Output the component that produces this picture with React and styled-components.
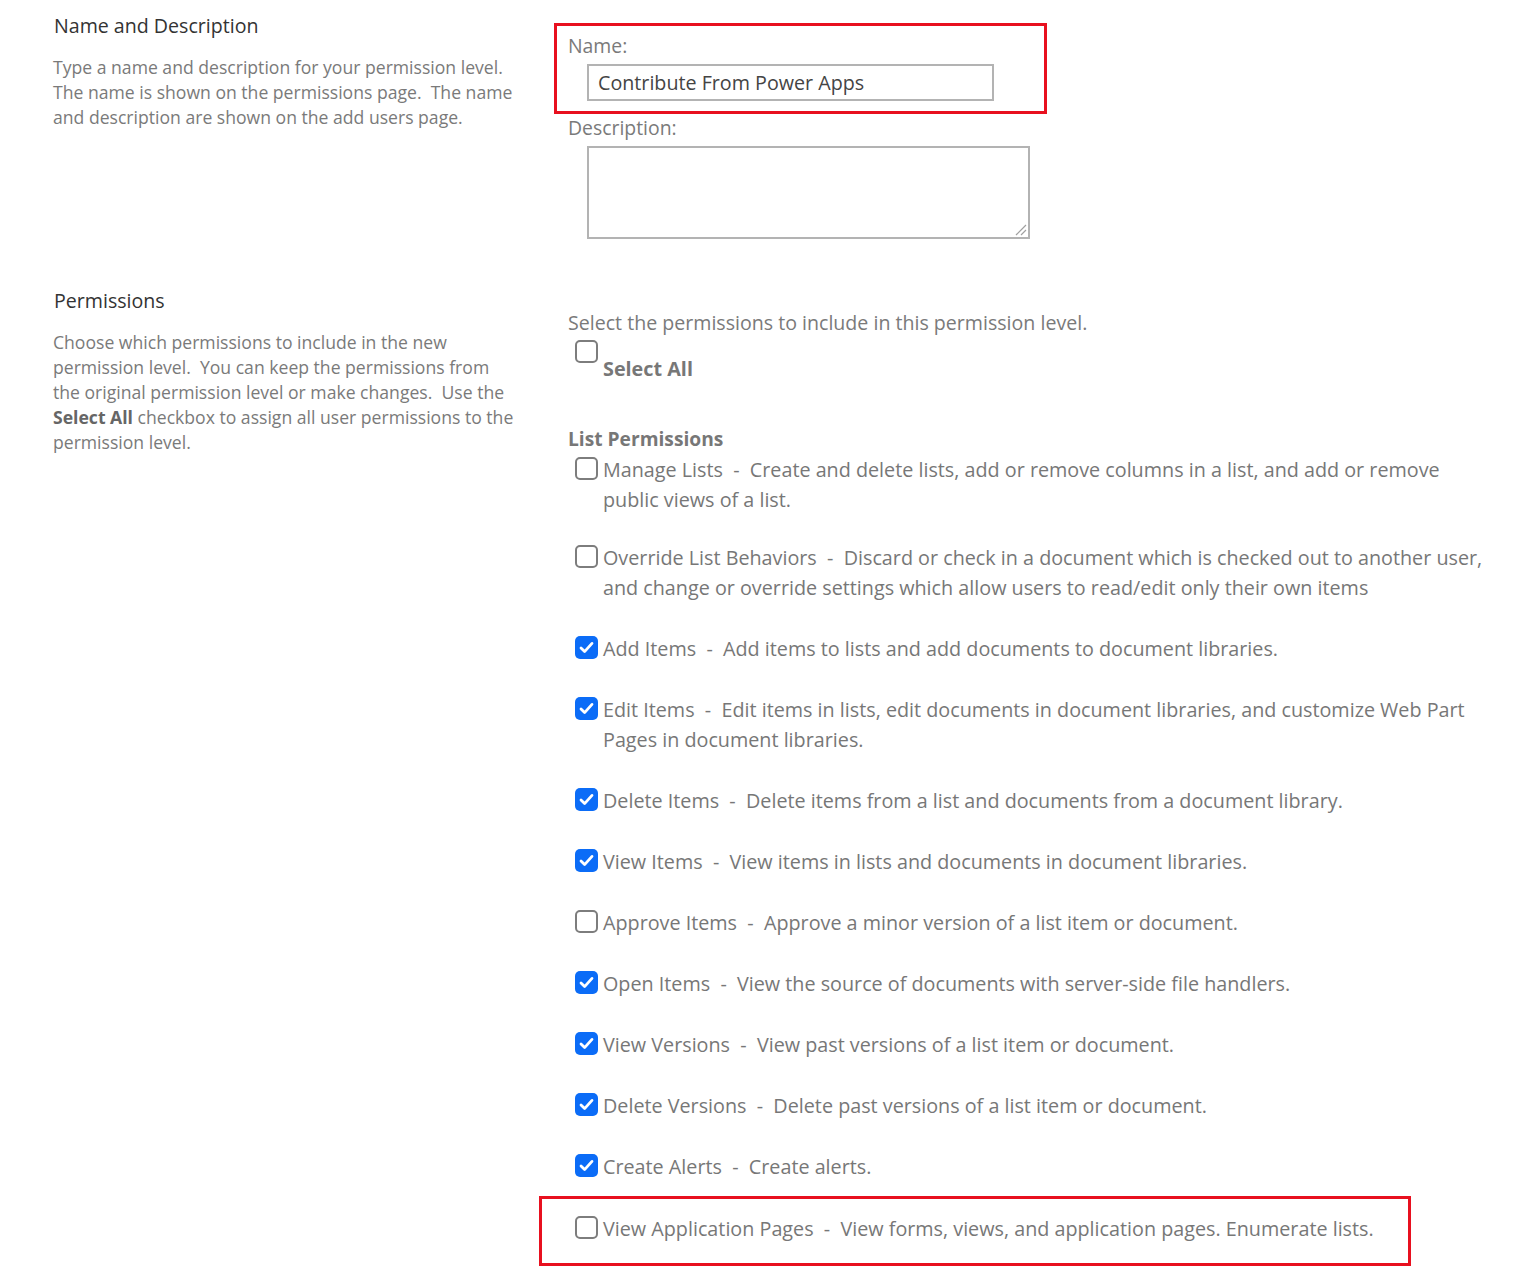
import React from "react";
import styled, { createGlobalStyle } from "styled-components";

const GlobalStyle = createGlobalStyle`
  html, body {
    margin: 0;
    padding: 0;
    background: #ffffff;
  }
  body {
    font-family: "Open Sans", "Noto Sans", sans-serif;
    color: #444;
  }
`;

const Page = styled.div`
  padding: 10px 0 20px 53px;
  width: 1490px;
  box-sizing: border-box;
`;

const Section = styled.section`
  display: grid;
  grid-template-columns: 466px 1fr;
  column-gap: 49px;
  margin-bottom: ${(p) => p.$gap || 0}px;
`;

const SideInfo = styled.div`
  padding-top: 2px;
`;

const SectionTitle = styled.h3`
  margin: 0 0 15px 1px;
  font-size: 19.6px;
  font-weight: 400;
  line-height: 28px;
  color: #333;
`;

const SideText = styled.p`
  margin: 0;
  font-size: 17.6px;
  line-height: 25px;
  color: #7a7a7a;
`;

const Strong = styled.strong`
  font-weight: 700;
  color: #666;
`;

const Fields = styled.div`
  display: flex;
  flex-direction: column;
`;

const Highlight = styled.div`
  border: 3px solid #e8101f;
  margin: ${(p) => p.$margin || "0"};
  padding: ${(p) => p.$pad || "7px 11px 10px"};
  width: ${(p) => p.$width};
  box-sizing: border-box;
`;

const FieldLabel = styled.div`
  margin-top: ${(p) => p.$top || 0}px;
  font-size: 19.4px;
  line-height: 26px;
  color: #7a7a7a;
`;

const TextInput = styled.div`
  margin: 5px 0 0 19px;
  width: 407px;
  height: 37px;
  box-sizing: border-box;
  border: 2px solid #b3b3b3;
  padding: 0 9px;
  font-size: 19.7px;
  line-height: 33px;
  color: #444;
`;

const TextArea = styled.div`
  position: relative;
  margin: 5px 0 0 19px;
  width: 443px;
  height: 93px;
  box-sizing: border-box;
  border: 2px solid #b3b3b3;
`;

const Grip = styled.svg`
  position: absolute;
  right: 1px;
  bottom: 1px;
`;

const Lead = styled.div`
  margin-top: 25px;
  font-size: 19.6px;
  line-height: 26px;
  color: #7a7a7a;
`;

const SelectAllRow = styled.div`
  display: flex;
  align-items: flex-start;
  margin: 2px 0 0 7px;
`;

const SelectAllText = styled.span`
  padding-top: 19px;
  font-size: 19.8px;
  font-weight: 700;
  line-height: 24px;
  color: #777;
`;

const GroupTitle = styled.div`
  margin-top: 45px;
  font-size: 19.2px;
  font-weight: 700;
  line-height: 26px;
  color: #777;
`;

const List = styled.div`
  display: flex;
  flex-direction: column;
  margin-top: 3px;
`;

const Item = styled.div`
  display: flex;
  align-items: flex-start;
  padding-left: 7px;
  margin-bottom: ${(p) => p.$space}px;
`;

const ItemText = styled.div`
  flex: 1;
  font-size: 19.75px;
  line-height: 30px;
  color: #777;
  white-space: pre-wrap;
`;

const Box = styled.span`
  flex: none;
  width: 23px;
  height: 23px;
  box-sizing: border-box;
  margin: 2px 5px 0 0;
  border-radius: 5px;
  border: ${(p) => (p.$on ? "none" : "2px solid #7d7d7d")};
  background: ${(p) => (p.$on ? "#0b6cf7" : "#fff")};
  display: flex;
  align-items: center;
  justify-content: center;
`;

const Checkbox = ({ on }) => (
  <Box $on={on}>
    {on && (
      <svg width="17" height="17" viewBox="0 0 17 17">
        <path d="M3 9l3.6 3.6L14 4.4" fill="none" stroke="#fff" strokeWidth="2.8" strokeLinecap="round" strokeLinejoin="round" />
      </svg>
    )}
  </Box>
);

const permissions = [
  { name: "Manage Lists", desc: "Create and delete lists, add or remove columns in a list, and add or remove public views of a list.", on: false },
  { name: "Override List Behaviors", desc: "Discard or check in a document which is checked out to another user, and change or override settings which allow users to read/edit only their own items", on: false },
  { name: "Add Items", desc: "Add items to lists and add documents to document libraries.", on: true },
  { name: "Edit Items", desc: "Edit items in lists, edit documents in document libraries, and customize Web Part Pages in document libraries.", on: true },
  { name: "Delete Items", desc: "Delete items from a list and documents from a document library.", on: true },
  { name: "View Items", desc: "View items in lists and documents in document libraries.", on: true },
  { name: "Approve Items", desc: "Approve a minor version of a list item or document.", on: false },
  { name: "Open Items", desc: "View the source of documents with server-side file handlers.", on: true },
  { name: "View Versions", desc: "View past versions of a list item or document.", on: true },
  { name: "Delete Versions", desc: "Delete past versions of a list item or document.", on: true },
  { name: "Create Alerts", desc: "Create alerts.", on: true },
];

const PermissionRow = ({ p, space = 31 }) => (
  <Item $space={space}>
    <Checkbox on={p.on} />
    <ItemText>{`${p.name}  -  ${p.desc}`}</ItemText>
  </Item>
);

const App = () => (
  <>
    <GlobalStyle />
    <Page>
      <Section $gap={46}>
        <SideInfo>
          <SectionTitle>Name and Description</SectionTitle>
          <SideText>
            Type a name and description for your permission level. The name is shown on the permissions page.&nbsp; The name and description are shown on the add users page.
          </SideText>
        </SideInfo>
        <Fields>
          <Highlight $width="493px" $margin="13px 0 0 -14px">
            <FieldLabel>Name:</FieldLabel>
            <TextInput>Contribute From Power Apps</TextInput>
          </Highlight>
          <FieldLabel $top={1}>Description:</FieldLabel>
          <TextArea>
            <Grip width="14" height="14" viewBox="0 0 14 14">
              <path d="M13 3L3 13M13 8L8 13" stroke="#a0a0a0" strokeWidth="1.2" />
            </Grip>
          </TextArea>
        </Fields>
      </Section>

      <Section>
        <SideInfo>
          <SectionTitle>Permissions</SectionTitle>
          <SideText>
            Choose which permissions to include in the new permission level.&nbsp; You can keep the permissions from the original permission level or make changes.&nbsp; Use the <Strong>Select All</Strong> checkbox to assign all user permissions to the permission level.
          </SideText>
        </SideInfo>
        <Fields>
          <Lead>Select the permissions to include in this permission level.</Lead>
          <SelectAllRow>
            <Checkbox on={false} />
            <SelectAllText>Select All</SelectAllText>
          </SelectAllRow>
          <GroupTitle>List Permissions</GroupTitle>
          <List>
            {permissions.map((p, i) => (
              <PermissionRow key={p.name} p={p} space={i === 0 ? 28 : 31} />
            ))}
            <Highlight $width="872px" $margin="-17px 0 0 -29px" $pad="15px 11px 19px 26px">
              <PermissionRow p={{ name: "View Application Pages", desc: "View forms, views, and application pages. Enumerate lists.", on: false }} space={0} />
            </Highlight>
          </List>
        </Fields>
      </Section>
    </Page>
  </>
);

export default App;
